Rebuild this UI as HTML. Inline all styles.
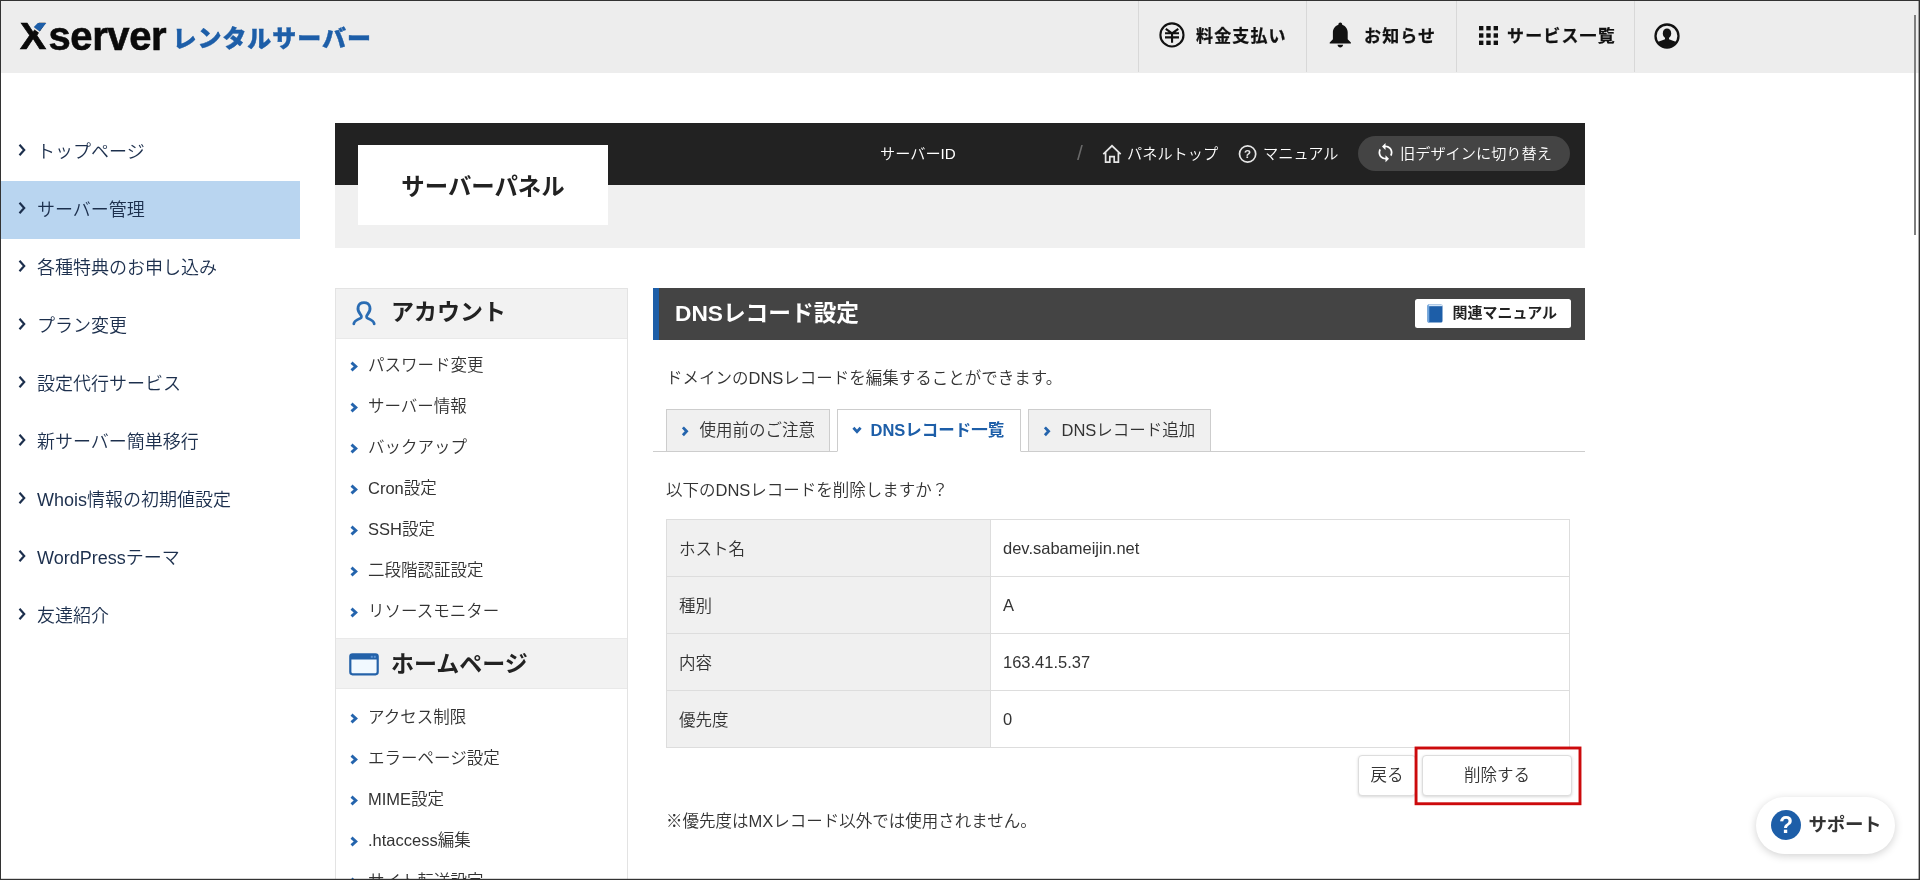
<!DOCTYPE html>
<html lang="ja">
<head>
<meta charset="utf-8">
<title>DNSレコード設定 | Xserver レンタルサーバー</title>
<style>
*{box-sizing:border-box;margin:0;padding:0}
html,body{width:1920px;height:880px;overflow:hidden;background:#fff}
body{will-change:transform;font-weight:350;font-family:"Liberation Sans","Noto Sans CJK JP",sans-serif;color:#333;position:relative}
.abs{position:absolute}
#frame{position:absolute;left:0;top:0;width:1920px;height:880px;border:1px solid #333;box-shadow:inset -1px 0 0 rgba(51,51,51,.4),inset 0 -1px 0 rgba(51,51,51,.2);z-index:100;pointer-events:none}
/* top header */
#hdr{position:absolute;left:0;top:0;width:1920px;height:73px;background:#ededed}
#logo{position:absolute;left:19px;top:14px;height:44px;white-space:nowrap}
#logo .x{font-weight:bold;font-size:37px;color:#0a0a0a;position:absolute;left:0.500px;top:1px;line-height:44px;transform:scaleX(1.06);transform-origin:0 50%;-webkit-text-stroke:0.700px #0a0a0a}
#logo .s{font-weight:bold;font-size:40px;color:#0a0a0a;position:absolute;left:29.500px;top:-0.500px;line-height:44px;letter-spacing:-0.400px;-webkit-text-stroke:0.600px #0a0a0a}
#logo .r{font-weight:900;font-size:24px;color:#1d5ea8;position:absolute;left:153.500px;top:1px;line-height:44px;font-family:"Noto Sans CJK JP",sans-serif;letter-spacing:0.950px;-webkit-text-stroke:0.400px #1d5ea8}
#logo svg{position:absolute;left:12.500px;top:8.300px}
.nav{position:absolute;top:0;height:72px;border-left:1px solid #d8d8d8;font-weight:bold;font-size:17px;letter-spacing:1.150px;color:#111;line-height:73px;white-space:nowrap;-webkit-text-stroke:0.250px #111}
.nav span{position:absolute;top:0}
/* left sidebar */
#side{position:absolute;left:0;top:123px;width:300px}
#side .it{height:58px;line-height:59px;font-size:18px;font-weight:350;color:#1c2f4d;padding-left:37px;position:relative;white-space:nowrap}
#side .it.on{background:#b9d5f0}
#side .it svg{position:absolute;left:18px;top:19.500px}
/* panel header */
#ph1{position:absolute;left:335px;top:123px;width:1250px;height:62px;background:#222}
#ph2{position:absolute;left:335px;top:185px;width:1250px;height:63px;background:#f0f0f0}
#ptitle{position:absolute;left:358px;top:145px;width:250px;height:80px;background:#fff;text-align:center;line-height:85px;font-size:23.400px;font-weight:bold;color:#222}
.pnav{position:absolute;top:124px;height:62px;line-height:60px;font-size:15.200px;color:#fff;white-space:nowrap}
.pic{position:absolute}
/* panel sidebar */
#ps{position:absolute;left:335px;top:288px;width:293px;height:600px;border:1px solid #e3e3e3;border-bottom:none}
#ps .h{height:50px;background:#f2f2f2;border-bottom:1px solid #e9e9e9;position:relative;font-weight:bold;font-size:23px;line-height:47px;color:#222;padding-left:55px;white-space:nowrap}
#ps .h svg{position:absolute}
#ps ul{list-style:none;padding:6px 0 6px 0}
#ps .h2{height:51px;border-top:1px solid #e9e9e9;line-height:50px}
#ps .u2{padding-top:7.500px}
#ps li{height:41px;line-height:41px;font-size:16.500px;color:#333;padding-left:32px;position:relative;white-space:nowrap}
#ps li svg{position:absolute;left:14px;top:16px}
/* main */
#mt{position:absolute;left:653px;top:288px;width:932px;height:52px;background:#444;border-left:6px solid #1d5ea8;color:#fff;font-weight:bold;font-size:22.700px;line-height:50px;padding-left:16px;white-space:nowrap}
#man{position:absolute;left:1415px;top:299px;width:156px;height:29px;background:#fff;border-radius:2.500px;font-weight:bold;font-size:15px;line-height:28px;color:#222;padding-left:37.500px;white-space:nowrap}
#man svg{position:absolute;left:12px;top:4.500px}
.txt{position:absolute;left:666px;font-size:16.500px;line-height:24px;color:#333;white-space:nowrap}
.tab{position:absolute;top:409px;height:43px;border:1px solid #cdcdcd;background:#f0f0f0;font-size:16.500px;line-height:41px;color:#333;white-space:nowrap;padding-left:32.500px}
.tab.on{background:#fff;border-bottom-color:#fff;color:#1d5ea8;font-weight:bold}
.tab svg{position:absolute;left:14px;top:16px}
.tab.on svg{left:14.100px;top:16.200px}
#tabline{position:absolute;left:653px;top:451px;width:932px;height:1px;background:#cdcdcd}
table{position:absolute;left:666px;top:519px;width:904px;border-collapse:collapse;font-size:16.500px}
td,th{height:57px;border:1px solid #ddd;text-align:left;font-weight:350;padding-left:12px;color:#333}
td{padding-top:1px}
th{padding-bottom:1px}
th{width:324px;background:#f0f0f0}
.btn{position:absolute;top:755px;height:41px;background:#fff;border:1px solid #ddd;border-radius:4px;box-shadow:0 1px 3px rgba(0,0,0,.16);font-size:16.500px;line-height:38px;text-align:center;color:#333;white-space:nowrap}
#red{position:absolute;left:1412px;top:744px}
#sup{position:absolute;left:1756px;top:797px;width:139px;height:57px;border-radius:29px;background:#fff;box-shadow:0 2px 8px rgba(0,0,0,.18)}
#sup b{position:absolute;left:52.500px;top:0;line-height:52px;font-size:18.500px;letter-spacing:-0.300px;color:#333;font-family:"Noto Sans CJK JP",sans-serif}
#sup em{position:absolute;left:15px;top:13px;width:30px;height:30px;border-radius:50%;background:#1d5ea8;color:#fff;font-style:normal;font-weight:bold;font-size:23px;line-height:30px;text-align:center}
#sb{position:absolute;left:1914px;top:15px;width:2px;height:220px;background:#7f7f7f}
</style>
</head>
<body>
<div id="hdr">
  <div id="logo"><span class="x">X</span><span class="s">server</span><svg width="16" height="12" viewBox="0 0 16 12"><polygon points="5.800,0.900 14.300,0.900 7.400,9.400 1.600,5.200" fill="#1d5ea8"/><path d="M0.800 5.400L8 10.600" stroke="#ededed" stroke-width="1.300" fill="none"/></svg><span class="r">レンタルサーバー</span></div>
  <div class="nav" style="left:1138px;width:168px">
    <svg class="abs" style="left:20px;top:22px" width="26" height="26" viewBox="0 0 26 26"><circle cx="12.950" cy="12.900" r="11.550" fill="none" stroke="#111" stroke-width="2.100"/><path d="M6.800 6.900L13.050 11.400L19.300 6.900M13.050 11.200V20.800M6 11.300H20M6 15.400H20" fill="none" stroke="#111" stroke-width="2.100"/></svg>
    <span style="left:57px">料金支払い</span>
  </div>
  <div class="nav" style="left:1306px;width:150px">
    <svg class="abs" style="left:21px;top:21px" width="24" height="28" viewBox="0 0 24 28"><path d="M12.300 1.500C13.400 1.500 14.200 2.300 14.200 3.400V3.700C17 4.700 19.700 7.500 19.700 11.500V18.300L22.900 21.600V22.600H1.700V21.600L4.900 18.300V11.500C4.900 7.500 7.600 4.700 10.400 3.700V3.400C10.400 2.300 11.200 1.500 12.300 1.500ZM9.500 23.800H15.100C14.800 25.500 13.700 26.500 12.300 26.500C10.900 26.500 9.800 25.500 9.500 23.800Z" fill="#111"/></svg>
    <span style="left:57px">お知らせ</span>
  </div>
  <div class="nav" style="left:1456px;width:178px">
    <svg class="abs" style="left:21.800px;top:25.600px" width="19" height="19" viewBox="0 0 19.500 19.500" fill="#111"><rect x="0" y="0" width="4.500" height="4.500"/><rect x="7.500" y="0" width="4.500" height="4.500"/><rect x="15" y="0" width="4.500" height="4.500"/><rect x="0" y="7.500" width="4.500" height="4.500"/><rect x="7.500" y="7.500" width="4.500" height="4.500"/><rect x="15" y="7.500" width="4.500" height="4.500"/><rect x="0" y="15" width="4.500" height="4.500"/><rect x="7.500" y="15" width="4.500" height="4.500"/><rect x="15" y="15" width="4.500" height="4.500"/></svg>
    <span style="left:50px">サービス一覧</span>
  </div>
  <div class="nav" style="left:1634px;width:100px">
    <svg class="abs" style="left:19.400px;top:23px" width="26" height="26" viewBox="0 0 26 26"><defs><clipPath id="uc"><circle cx="13" cy="13" r="11"/></clipPath></defs><circle cx="13" cy="13" r="11.500" fill="none" stroke="#111" stroke-width="2.300"/><g clip-path="url(#uc)" fill="#111"><ellipse cx="13" cy="10.400" rx="4.200" ry="5"/><path d="M11 13h4v3.200c2.500 .8 5.500 1.800 8 3.300v7H3v-7c2.500-1.500 5.500-2.500 8-3.300z"/></g></svg>
  </div>
</div>

<div id="side">
  <div class="it"><svg width="9" height="14" viewBox="0 0 9 14"><path d="M1.500 1.700L6.200 7L1.500 12.300" fill="none" stroke="#1c2f4d" stroke-width="2.200"/></svg>トップページ</div>
  <div class="it on"><svg width="9" height="14" viewBox="0 0 9 14"><path d="M1.500 1.700L6.200 7L1.500 12.300" fill="none" stroke="#1c2f4d" stroke-width="2.200"/></svg>サーバー管理</div>
  <div class="it"><svg width="9" height="14" viewBox="0 0 9 14"><path d="M1.500 1.700L6.200 7L1.500 12.300" fill="none" stroke="#1c2f4d" stroke-width="2.200"/></svg>各種特典のお申し込み</div>
  <div class="it"><svg width="9" height="14" viewBox="0 0 9 14"><path d="M1.500 1.700L6.200 7L1.500 12.300" fill="none" stroke="#1c2f4d" stroke-width="2.200"/></svg>プラン変更</div>
  <div class="it"><svg width="9" height="14" viewBox="0 0 9 14"><path d="M1.500 1.700L6.200 7L1.500 12.300" fill="none" stroke="#1c2f4d" stroke-width="2.200"/></svg>設定代行サービス</div>
  <div class="it"><svg width="9" height="14" viewBox="0 0 9 14"><path d="M1.500 1.700L6.200 7L1.500 12.300" fill="none" stroke="#1c2f4d" stroke-width="2.200"/></svg>新サーバー簡単移行</div>
  <div class="it"><svg width="9" height="14" viewBox="0 0 9 14"><path d="M1.500 1.700L6.200 7L1.500 12.300" fill="none" stroke="#1c2f4d" stroke-width="2.200"/></svg>Whois情報の初期値設定</div>
  <div class="it"><svg width="9" height="14" viewBox="0 0 9 14"><path d="M1.500 1.700L6.200 7L1.500 12.300" fill="none" stroke="#1c2f4d" stroke-width="2.200"/></svg>WordPressテーマ</div>
  <div class="it"><svg width="9" height="14" viewBox="0 0 9 14"><path d="M1.500 1.700L6.200 7L1.500 12.300" fill="none" stroke="#1c2f4d" stroke-width="2.200"/></svg>友達紹介</div>
</div>

<div id="ph1"></div>
<div id="ph2"></div>
<div id="ptitle">サーバーパネル</div>
<div class="pnav" style="left:880px">サーバーID</div>
<div class="pnav" style="left:1077px;color:#6a6a6a;font-size:21px;top:123px">/</div>
<svg class="pic" style="left:1102px;top:144px" width="20" height="20" viewBox="0 0 20 20"><path d="M1.300 10.200L10 1.800L18.700 10.200M3.600 8.600V18.200H7.800V12.600H12.200V18.200H16.400V8.600" fill="none" stroke="#e6e6e6" stroke-width="1.700"/></svg>
<div class="pnav" style="left:1127px">パネルトップ</div>
<svg class="pic" style="left:1238px;top:144px" width="20" height="20" viewBox="0 0 20 20"><circle cx="9.600" cy="10" r="8.100" fill="none" stroke="#e6e6e6" stroke-width="1.700"/><text x="9.600" y="14" text-anchor="middle" font-family="Liberation Sans, sans-serif" font-weight="bold" font-size="11.500" fill="#e6e6e6">?</text></svg>
<div class="pnav" style="left:1263px">マニュアル</div>
<div class="abs" style="left:1358px;top:136px;width:212px;height:35px;border-radius:18px;background:#444"></div>
<svg class="pic" style="left:1374.500px;top:142px" width="21" height="21" viewBox="0 0 24 24"><path fill="#fff" d="M12 4V1L8 5l4 4V6c3.310 0 6 2.690 6 6 0 1.010-.25 1.970-.7 2.800l1.460 1.460C19.540 15.030 20 13.570 20 12c0-4.420-3.580-8-8-8zm0 14c-3.310 0-6-2.690-6-6 0-1.010.25-1.970.7-2.800L5.240 7.740C4.460 8.970 4 10.430 4 12c0 4.420 3.580 8 8 8v3l4-4-4-4v3z"/></svg>
<div class="pnav" style="left:1400px">旧デザインに切り替え</div>

<div id="ps">
  <div class="h"><svg style="left:14.600px;top:11px" width="26" height="26" viewBox="0 0 28 28"><path d="M3 25.800C3.300 22.600 6 21.400 9.600 20C11.700 19.100 11.700 17.300 10.200 15.600C7.600 12.600 7.200 9.400 7.700 7.400C8.500 4.300 11 2.900 14 2.900C17 2.900 19.500 4.300 20.300 7.400C20.800 9.400 20.400 12.600 17.800 15.600C16.300 17.300 16.300 19.100 18.400 20C22 21.400 24.700 22.600 25 25.800" fill="none" stroke="#2a6cb3" stroke-width="3" stroke-linecap="round" stroke-linejoin="round"/></svg>アカウント</div>
  <ul>
    <li><svg width="10" height="11" viewBox="0 0 10 11"><path d="M1.500 1.600L5.800 5.500L1.500 9.400" fill="none" stroke="#2464ad" stroke-width="2.900"/></svg>パスワード変更</li><li><svg width="10" height="11" viewBox="0 0 10 11"><path d="M1.500 1.600L5.800 5.500L1.500 9.400" fill="none" stroke="#2464ad" stroke-width="2.900"/></svg>サーバー情報</li><li><svg width="10" height="11" viewBox="0 0 10 11"><path d="M1.500 1.600L5.800 5.500L1.500 9.400" fill="none" stroke="#2464ad" stroke-width="2.900"/></svg>バックアップ</li><li><svg width="10" height="11" viewBox="0 0 10 11"><path d="M1.500 1.600L5.800 5.500L1.500 9.400" fill="none" stroke="#2464ad" stroke-width="2.900"/></svg>Cron設定</li><li><svg width="10" height="11" viewBox="0 0 10 11"><path d="M1.500 1.600L5.800 5.500L1.500 9.400" fill="none" stroke="#2464ad" stroke-width="2.900"/></svg>SSH設定</li><li><svg width="10" height="11" viewBox="0 0 10 11"><path d="M1.500 1.600L5.800 5.500L1.500 9.400" fill="none" stroke="#2464ad" stroke-width="2.900"/></svg>二段階認証設定</li><li><svg width="10" height="11" viewBox="0 0 10 11"><path d="M1.500 1.600L5.800 5.500L1.500 9.400" fill="none" stroke="#2464ad" stroke-width="2.900"/></svg>リソースモニター</li>
  </ul>
  <div class="h h2"><svg style="left:12.500px;top:13.600px" width="31" height="24" viewBox="0 0 31 24"><rect x="1.300" y="1.300" width="27.400" height="20" rx="2.200" fill="#f1f9ff" stroke="#2462a9" stroke-width="2.200"/><rect x="1.300" y="1.300" width="27.400" height="5.200" fill="#2462a9"/><rect x="21.800" y="2.800" width="2" height="2" fill="#5b93d4"/><rect x="24.800" y="2.800" width="2" height="2" fill="#5b93d4"/></svg>ホームページ</div>
  <ul class="u2">
    <li><svg width="10" height="11" viewBox="0 0 10 11"><path d="M1.500 1.600L5.800 5.500L1.500 9.400" fill="none" stroke="#2464ad" stroke-width="2.900"/></svg>アクセス制限</li><li><svg width="10" height="11" viewBox="0 0 10 11"><path d="M1.500 1.600L5.800 5.500L1.500 9.400" fill="none" stroke="#2464ad" stroke-width="2.900"/></svg>エラーページ設定</li><li><svg width="10" height="11" viewBox="0 0 10 11"><path d="M1.500 1.600L5.800 5.500L1.500 9.400" fill="none" stroke="#2464ad" stroke-width="2.900"/></svg>MIME設定</li><li><svg width="10" height="11" viewBox="0 0 10 11"><path d="M1.500 1.600L5.800 5.500L1.500 9.400" fill="none" stroke="#2464ad" stroke-width="2.900"/></svg>.htaccess編集</li><li><svg width="10" height="11" viewBox="0 0 10 11"><path d="M1.500 1.600L5.800 5.500L1.500 9.400" fill="none" stroke="#2464ad" stroke-width="2.900"/></svg>サイト転送設定</li>
  </ul>
</div>

<div id="mt">DNSレコード設定</div>
<div id="man"><svg width="17" height="20" viewBox="0 0 17 20"><rect x="0.500" y="0.500" width="15" height="18" rx="1.500" fill="#1d5ea8"/><rect x="0.500" y="0.500" width="1.800" height="18" rx="0.900" fill="#6fa5de"/><rect x="1.800" y="0.500" width="13.700" height="1.700" fill="#d5e6f7"/></svg>関連マニュアル</div>
<div class="txt" style="top:366px">ドメインのDNSレコードを編集することができます。</div>
<div id="tabline"></div>
<div class="tab" style="left:666px;width:164px"><svg width="10" height="12" viewBox="0 0 10 12"><path d="M1.900 1.400L5.600 5.300L1.900 9.200" fill="none" stroke="#2464ad" stroke-width="2.800"/></svg>使用前のご注意</div>
<div class="tab on" style="left:837px;width:184px"><svg width="12" height="10" viewBox="0 0 12 10"><path d="M1.400 1.800L5 5.600L8.600 1.800" fill="none" stroke="#2464ad" stroke-width="2.800"/></svg>DNSレコード一覧</div>
<div class="tab" style="left:1028px;width:183px"><svg width="10" height="12" viewBox="0 0 10 12"><path d="M1.900 1.400L5.600 5.300L1.900 9.200" fill="none" stroke="#2464ad" stroke-width="2.800"/></svg>DNSレコード追加</div>
<div class="txt" style="top:478px">以下のDNSレコードを削除しますか？</div>
<table>
  <tr><th>ホスト名</th><td>dev.sabameijin.net</td></tr>
  <tr><th>種別</th><td>A</td></tr>
  <tr><th>内容</th><td>163.41.5.37</td></tr>
  <tr><th>優先度</th><td>0</td></tr>
</table>
<div class="btn" style="left:1358px;width:58px">戻る</div>
<svg id="red" width="176" height="66" viewBox="0 0 176 66"><rect x="4.050" y="4" width="163.950" height="55.750" fill="#fff" stroke="#cc0a0c" stroke-width="2.900"/></svg>
<div class="btn" style="left:1422px;width:150px">削除する</div>
<div class="txt" style="top:809px">※優先度はMXレコード以外では使用されません。</div>

<div id="sup"><em>?</em><b>サポート</b></div>
<div id="sb"></div>
<div id="frame"></div>
</body>
</html>
